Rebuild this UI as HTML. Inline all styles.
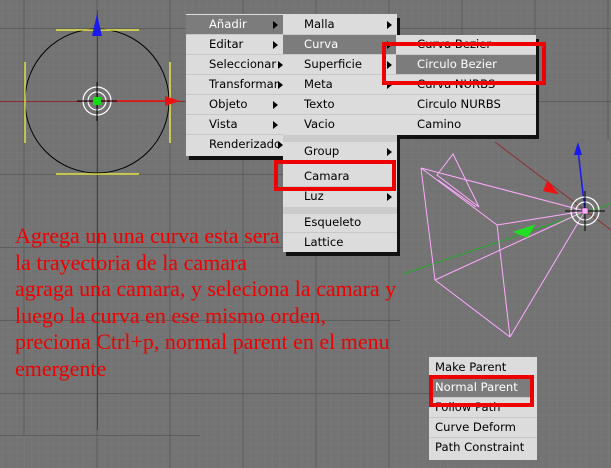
<!DOCTYPE html>
<html><head><meta charset="utf-8"><style>
*{margin:0;padding:0;box-sizing:border-box}
body{width:611px;height:468px;overflow:hidden;position:relative;background:#737373;font-family:"DejaVu Sans","Liberation Sans",sans-serif}
.m{position:absolute;background:#dcdcdc;box-shadow:3px 4px 0 #111}
.r{position:absolute;left:0;right:0;height:20px;line-height:19px;font-size:11.6px;color:#000;border-bottom:1px solid #c8c8c8;white-space:nowrap;overflow:hidden}
.r.h{background:#7c7c7c;color:#fff}
.r .a{position:absolute;right:5px;top:6px;width:0;height:0;border-left:5px solid #000;border-top:4px solid transparent;border-bottom:4px solid transparent}
.sep{position:absolute;left:0;right:0;height:7px;background:#cbcbcb}
.box{position:absolute;border:4px solid #e00}
.txt{position:absolute;left:15px;top:223px;font-family:"Liberation Serif",serif;font-size:22px;line-height:26.5px;color:#ee0000;white-space:nowrap}
</style></head><body>
<svg width="611" height="468" style="position:absolute;left:0;top:0">
<defs><pattern id="g" width="7.3" height="7.3" patternUnits="userSpaceOnUse" x="24" y="28"><path d="M0 0H7.3M0 0V7.3" stroke="#7a7a7a" stroke-width="1"/></pattern></defs>
<rect width="611" height="468" fill="url(#g)"/>
<g stroke="#5e5e5e" stroke-width="1">
<path d="M24 0V435M97 0V468M170 0V468M243 0V468M316 0V468M389 0V468M462 0V140M535 0V140M608 0V140"/>
<path d="M0 28.5H611M0 101.5H611M0 174.5H400M0 247.5H400M0 320.5H400M0 393.5H430M0 435.5H200"/>
</g>
<line x1="0" y1="101.5" x2="185" y2="101.5" stroke="#8a2a2a"/>
<line x1="97.5" y1="10" x2="97.5" y2="430" stroke="#3333aa"/>
<line x1="495" y1="142" x2="611" y2="230" stroke="#8a3030"/>
<line x1="403" y1="274" x2="611" y2="204" stroke="#22aa22"/>
<circle cx="97" cy="101" r="72" fill="none" stroke="#000" stroke-width="1"/>
<g stroke="#ffff40" stroke-width="1.2" fill="none">
<path d="M56 30H139M56 174H139M25 62V143M170 62V143"/>
</g>
<path d="M97 14L92 36H102Z" fill="#1a1aee"/>
<line x1="97" y1="101" x2="175" y2="101" stroke="#ee1111" stroke-width="1.5"/>
<path d="M165 96L180 101L165 106Z" fill="#ee1111"/>
<circle cx="97" cy="101" r="14" fill="none" stroke="#fff" stroke-width="1.2"/>
<circle cx="97" cy="101" r="9" fill="none" stroke="#fff" stroke-width="1.2"/>
<path d="M77 101H117M97 82V121" stroke="#000" stroke-width="1"/>
<rect x="93" y="97" width="8" height="8" fill="#11dd11"/>
<g stroke="#ffaaff" stroke-width="1" fill="none">
<path d="M585 211L421 168M585 211L497 225M585 211L435 280M585 211L510 337M421 168L435 280M435 280L510 337M510 337L497 225M497 225L421 168"/>
<path d="M453 154L479 207L437 175Z M438 180L476 207"/>
</g>
<line x1="585" y1="211" x2="578" y2="150" stroke="#1a1aee" stroke-width="1.5"/>
<path d="M578 142L574 155H582Z" fill="#1a1aee"/>
<path d="M548 183L555 192L545 190Z" fill="#ee1111" stroke="#ee1111" stroke-width="3"/>
<path d="M517 232L532 227L527 236Z" fill="#22dd22" stroke="#22dd22" stroke-width="3"/>
<circle cx="585" cy="211" r="14" fill="none" stroke="#fff" stroke-width="1.2"/>
<circle cx="585" cy="211" r="9" fill="none" stroke="#fff" stroke-width="1.2"/>
<path d="M565 211H605M585 191V231" stroke="#000"/>
<rect x="582" y="208" width="6" height="6" fill="#ffaaff" stroke="#333" stroke-width="0.5"/>
</svg>

<div class="m" style="left:186px;top:14px;width:97px;height:142px">
<div class="r h" style="top:1px;padding-left:23px">Añadir<span class="a"></span></div>
<div class="r" style="top:21px;padding-left:23px">Editar<span class="a"></span></div>
<div class="r" style="top:41px;padding-left:23px">Seleccionar<span class="a" style="right:0"></span></div>
<div class="r" style="top:61px;padding-left:23px">Transformar<span class="a" style="right:0"></span></div>
<div class="r" style="top:81px;padding-left:23px">Objeto<span class="a"></span></div>
<div class="r" style="top:101px;padding-left:23px">Vista<span class="a"></span></div>
<div class="r" style="top:121px;padding-left:23px;border:none">Renderizado<span class="a" style="right:0"></span></div>
</div>

<div class="m" style="left:283px;top:14px;width:114px;height:238px">
<div class="r" style="top:1px;padding-left:21px">Malla<span class="a"></span></div>
<div class="r h" style="top:21px;padding-left:21px">Curva<span class="a"></span></div>
<div class="r" style="top:41px;padding-left:21px">Superficie<span class="a"></span></div>
<div class="r" style="top:61px;padding-left:21px">Meta<span class="a"></span></div>
<div class="r" style="top:81px;padding-left:21px">Texto</div>
<div class="r" style="top:101px;padding-left:21px;border:none">Vacio</div>
<div class="sep" style="top:121px"></div>
<div class="r" style="top:128px;padding-left:21px">Group<span class="a"></span></div>
<div class="r" style="top:153px;padding-left:21px">Camara</div>
<div class="r" style="top:173px;padding-left:21px;border:none">Luz<span class="a"></span></div>
<div class="sep" style="top:193px"></div>
<div class="r" style="top:199px;padding-left:21px">Esqueleto</div>
<div class="r" style="top:219px;padding-left:21px;border:none">Lattice</div>
</div>

<div class="m" style="left:396px;top:35px;width:140px;height:100px">
<div class="r" style="top:0;padding-left:21px">Curva Bezier</div>
<div class="r h" style="top:20px;padding-left:21px">Circulo Bezier</div>
<div class="r" style="top:40px;padding-left:21px">Curva NURBS</div>
<div class="r" style="top:60px;padding-left:21px">Circulo NURBS</div>
<div class="r" style="top:80px;padding-left:21px;border:none">Camino</div>
</div>

<div class="m" style="left:429px;top:357px;width:108px;height:103px;box-shadow:none">
<div class="r" style="top:1px;padding-left:6px">Make Parent</div>
<div class="r h" style="top:21px;left:3px;right:3px;padding-left:3px">Normal Parent</div>
<div class="r" style="top:41px;padding-left:6px">Follow Path</div>
<div class="r" style="top:61px;padding-left:6px">Curve Deform</div>
<div class="r" style="top:81px;padding-left:6px;border:none">Path Constraint</div>
</div>

<div class="box" style="left:382px;top:42px;width:164px;height:43px"></div>
<div class="box" style="left:274px;top:160px;width:122px;height:31px"></div>
<div class="box" style="left:429px;top:375px;width:105px;height:32px"></div>

<div class="txt">Agrega un una curva esta sera<br>la trayectoria de la camara<br>agraga una camara, y seleciona la camara y<br>luego la curva en ese mismo orden,<br>preciona Ctrl+p, normal parent en el menu<br>emergente</div>
</body></html>
